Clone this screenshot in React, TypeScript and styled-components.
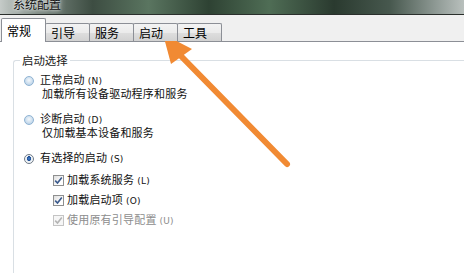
import React from 'react';
import styled, { createGlobalStyle } from 'styled-components';

const GlobalStyle = createGlobalStyle`
  html, body {
    margin: 0;
    padding: 0;
    background: #ffffff;
  }
  body {
    font-family: 'Noto Sans CJK SC', 'Noto Sans', sans-serif;
    overflow: hidden;
  }
`;

const tabs = ['常规', '引导', '服务', '启动', '工具'];

const App: React.FC = () => {
  return (
    <>
      <GlobalStyle />
      <Window>
        <TitleBar>
          <Title>系统配置</Title>
        </TitleBar>
        <TabStrip>
          {tabs.map((t, i) => (
            <Tab key={t} $active={i === 0}>
              {t}
            </Tab>
          ))}
        </TabStrip>
        <Content>
          <GroupBox>
            <Legend>启动选择</Legend>
            <GroupBody>
              <RadioOption>
                <OptionLine>
                  <Radio />
                  <Label>正常启动<Accel>(N)</Accel></Label>
                </OptionLine>
                <Desc>加载所有设备驱动程序和服务</Desc>
              </RadioOption>
              <RadioOption>
                <OptionLine>
                  <Radio />
                  <Label>诊断启动<Accel>(D)</Accel></Label>
                </OptionLine>
                <Desc>仅加载基本设备和服务</Desc>
              </RadioOption>
              <RadioOption>
                <OptionLine>
                  <Radio $checked />
                  <Label>有选择的启动<Accel>(S)</Accel></Label>
                </OptionLine>
              </RadioOption>
              <CheckList>
                <CheckRow>
                  <CheckBox>
                    <CheckMark />
                  </CheckBox>
                  <Label>加载系统服务<Accel>(L)</Accel></Label>
                </CheckRow>
                <CheckRow>
                  <CheckBox>
                    <CheckMark />
                  </CheckBox>
                  <Label>加载启动项<Accel>(O)</Accel></Label>
                </CheckRow>
                <CheckRow>
                  <CheckBox $disabled>
                    <CheckMark $disabled />
                  </CheckBox>
                  <Label $disabled>使用原有引导配置<Accel>(U)</Accel></Label>
                </CheckRow>
              </CheckList>
            </GroupBody>
          </GroupBox>
        </Content>
        <Arrow />
      </Window>
    </>
  );
};

const CheckMark: React.FC<{ $disabled?: boolean }> = ({ $disabled }) => (
  <svg width="9" height="9" viewBox="0 0 9 9">
    <path
      d="M1.2 4.6 L3.5 7 L7.8 1.4"
      fill="none"
      stroke={$disabled ? '#b4b4b4' : '#3b5a8c'}
      strokeWidth="1.6"
    />
  </svg>
);

// annotation arrow drawn over the dialog
const Arrow: React.FC = () => (
  <ArrowSvg width="464" height="273" viewBox="0 0 464 273">
    <line x1="287" y1="164" x2="178" y2="53" stroke="#f18a33" strokeWidth="6" strokeLinecap="round" />
    <polygon points="163,34 171,64 192,49" fill="#f18a33" />
  </ArrowSvg>
);

const Window = styled.div`
  position: relative;
  width: 464px;
  height: 273px;
  display: flex;
  flex-direction: column;
  overflow: hidden;
  background: #ffffff;
`;

const TitleBar = styled.div`
  height: 14px;
  flex-shrink: 0;
  display: flex;
  align-items: flex-end;
  overflow: hidden;
  border-bottom: 1px solid #2a2f2c;
  background: linear-gradient(
    90deg,
    #c5cbc8 0%,
    #7e8b84 8%,
    #3d4d42 20%,
    #5a7560 32%,
    #2e4233 45%,
    #4f6d55 58%,
    #2a3a2f 72%,
    #47584e 84%,
    #8f9a95 94%,
    #b9c0bd 100%
  );
`;

const Title = styled.div`
  margin-left: 13px;
  margin-bottom: 4px;
  font-size: 12px;
  line-height: 12px;
  color: #111;
  text-shadow: 0 0 6px rgba(255, 255, 255, 0.9), 0 0 3px rgba(255, 255, 255, 0.9);
`;

const TabStrip = styled.div`
  height: 26px;
  flex-shrink: 0;
  display: flex;
  align-items: flex-end;
  padding-left: 2px;
  background: #f0f0f0;
  border-bottom: 1px solid #8c8f96;
`;

const Tab = styled.div<{ $active?: boolean }>`
  box-sizing: border-box;
  width: 45px;
  height: ${(p) => (p.$active ? 24 : 18)}px;
  margin-bottom: ${(p) => (p.$active ? -1 : 0)}px;
  margin-left: -1px;
  padding-left: 5px;
  display: flex;
  align-items: center;
  font-size: 12px;
  color: #000;
  border: 1px solid #8c8f96;
  border-bottom: none;
  border-radius: 2px 2px 0 0;
  position: relative;
  z-index: ${(p) => (p.$active ? 2 : 1)};
  background: ${(p) =>
    p.$active
      ? '#ffffff'
      : 'linear-gradient(#f3f3f3 0%, #ebebeb 50%, #dedede 51%, #d2d2d2 100%)'};
`;

const Content = styled.div`
  flex: 1;
  background: #ffffff;
  padding-top: 11px;
`;

const GroupBox = styled.fieldset`
  margin: 0 0 0 13px;
  padding: 0;
  height: 100%;
  border: 1px solid #d9dfe4;
  border-right: none;
  border-bottom: none;
  border-radius: 3px 0 0 0;
`;

const Legend = styled.legend`
  margin-left: 6px;
  padding: 0 2px;
  font-size: 11.4px;
  line-height: 14px;
  color: #1a1a1a;
`;

const GroupBody = styled.div`
  padding: 7px 0 0 10px;
  font-size: 11px;
  color: #111;
`;

const RadioOption = styled.div`
  margin-bottom: 13px;
`;

const OptionLine = styled.div`
  display: flex;
  align-items: center;
  height: 13px;
`;

const Radio = styled.span<{ $checked?: boolean }>`
  box-sizing: border-box;
  width: 10px;
  height: 10px;
  border-radius: 50%;
  margin-right: 6px;
  flex-shrink: 0;
  border: 1px solid ${(p) => (p.$checked ? '#6f7a86' : '#8fb3d3')};
  background: ${(p) =>
    p.$checked
      ? 'radial-gradient(circle at 50% 45%, #3f7fd0 0%, #1d4a8e 38%, #e8eef4 42%, #ffffff 100%)'
      : 'radial-gradient(circle at 50% 40%, #f4f8fb 0%, #c9dced 60%, #a9c6e0 100%)'};
`;

const Label = styled.span<{ $disabled?: boolean }>`
  font-size: 11px;
  letter-spacing: 0.2px;
  line-height: 13px;
  white-space: nowrap;
  color: ${(p) => (p.$disabled ? '#8d8d8d' : '#111')};
`;

const Accel = styled.span`
  margin-left: 3px;
  font-size: 9px;
  font-family: 'DejaVu Sans', sans-serif;
`;

const Desc = styled.div`
  padding-left: 18px;
  font-size: 11px;
  letter-spacing: 0.2px;
  line-height: 13px;
  color: #111;
`;

const CheckList = styled.div`
  display: flex;
  flex-direction: column;
  gap: 7px;
  margin-top: -4px;
  padding-left: 29px;
`;

const CheckRow = styled.div`
  display: flex;
  align-items: center;
  height: 13px;
`;

const CheckBox = styled.span<{ $disabled?: boolean }>`
  box-sizing: border-box;
  width: 11px;
  height: 11px;
  margin-right: 3px;
  display: flex;
  align-items: center;
  justify-content: center;
  flex-shrink: 0;
  border: 1px solid ${(p) => (p.$disabled ? '#c4c4c4' : '#8e8f8f')};
  background: ${(p) =>
    p.$disabled ? '#f6f6f6' : 'linear-gradient(135deg, #dedede 0%, #ffffff 70%)'};
`;

const ArrowSvg = styled.svg`
  position: absolute;
  left: 0;
  top: 0;
  pointer-events: none;
`;

export default App;
